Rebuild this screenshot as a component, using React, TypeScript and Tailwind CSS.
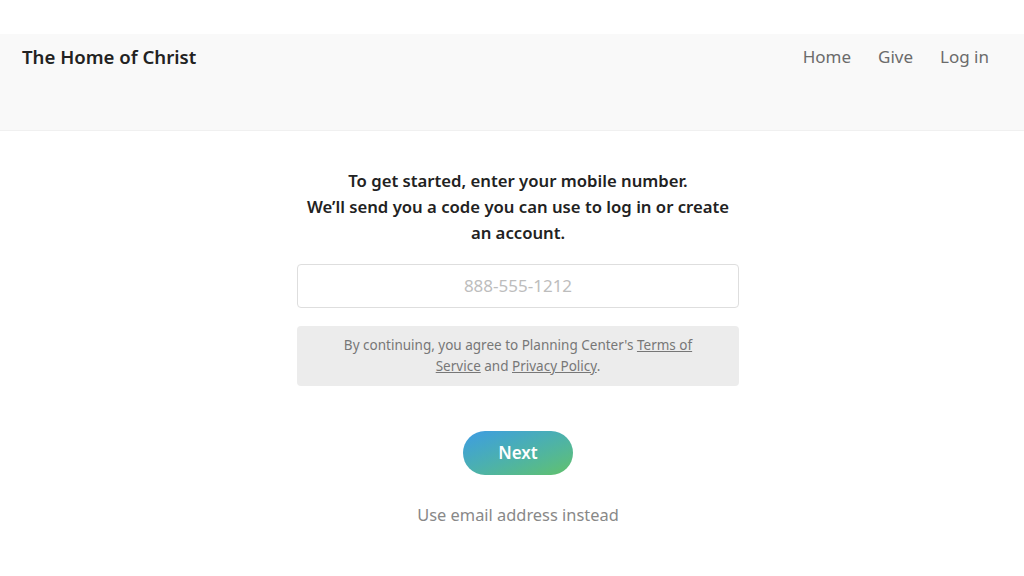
export default function App() {
  return (
    <div className="min-h-[576px] bg-white" style={{ fontFamily: '"Noto Sans", "Open Sans", sans-serif' }}>
      <div className="h-[34px]" />
      <header className="h-[97px] bg-[#f9f9f9] border-b border-[#f0f0f0] flex items-start justify-between px-[22px] pt-[11px]">
        <div className="text-[18.6px] font-semibold text-[#222] leading-[24px]">The Home of Christ</div>
        <nav className="flex gap-[27px] pr-[13px] text-[17px] text-[#6b6b6b] leading-[24px]">
          <a>Home</a>
          <a>Give</a>
          <a>Log in</a>
        </nav>
      </header>
      <main className="flex flex-col items-center pt-[37px] pl-[12px]">
        <div className="w-[442px] flex flex-col items-center">
          <p className="text-[16.7px] font-semibold text-[#222] leading-[26px] text-center px-[4px]">
            To get started, enter your mobile number.
            <br />
            We’ll send you a code you can use to log in or create an account.
          </p>
          <div className="mt-[18px] w-full h-[44px] border border-[#dedede] rounded-[4px] flex items-center justify-center text-[17px] text-[#bdbdbd]">
            888-555-1212
          </div>
          <div className="mt-[18px] w-full h-[60px] bg-[#ececec] rounded-[4px] flex flex-col items-center justify-center text-[13.5px] leading-[21px] text-[#777] text-center">
            <p>
              By continuing, you agree to Planning Center's <span className="underline">Terms of</span>
            </p>
            <p>
              <span className="underline">Service</span> and <span className="underline">Privacy Policy</span>.
            </p>
          </div>
          <button className="mt-[45px] w-[110px] h-[44px] rounded-full bg-gradient-to-br from-[#3f9be3] to-[#62c168] text-white text-[17px] font-semibold">
            Next
          </button>
          <div className="mt-[28px] text-[16.4px] text-[#888]">Use email address instead</div>
        </div>
      </main>
    </div>
  );
}
